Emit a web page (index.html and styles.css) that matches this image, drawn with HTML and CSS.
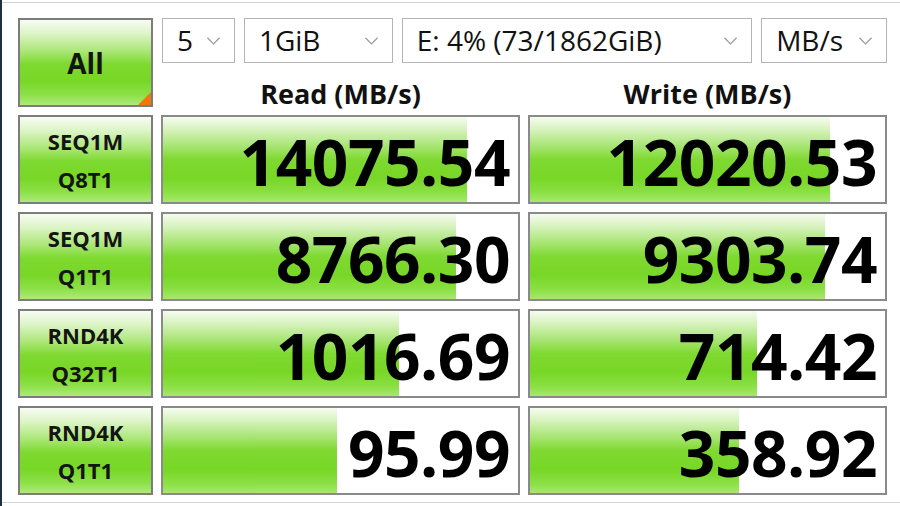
FILE: index.html
```html
<!DOCTYPE html>
<html>
<head>
<meta charset="utf-8">
<link rel="stylesheet" href="styles.css">
</head>
<body>
<div class="frame">
  <div class="grid">
    <div class="btn all">All<span class="corner"></span></div>
    <div class="combos">
      <div class="combo w5"><span>5</span><svg class="chev" viewBox="0 0 16 10"><path d="M1.5 1.5 L8 8 L14.5 1.5" fill="none" stroke="#9a9a9a" stroke-width="1.3"/></svg></div>
      <div class="combo w1g"><span>1GiB</span><svg class="chev" viewBox="0 0 16 10"><path d="M1.5 1.5 L8 8 L14.5 1.5" fill="none" stroke="#9a9a9a" stroke-width="1.3"/></svg></div>
      <div class="combo wdrv"><span>E: 4% (73/1862GiB)</span><svg class="chev" viewBox="0 0 16 10"><path d="M1.5 1.5 L8 8 L14.5 1.5" fill="none" stroke="#9a9a9a" stroke-width="1.3"/></svg></div>
      <div class="combo wunit"><span>MB/s</span><svg class="chev" viewBox="0 0 16 10"><path d="M1.5 1.5 L8 8 L14.5 1.5" fill="none" stroke="#9a9a9a" stroke-width="1.3"/></svg></div>
    </div>
    <div class="head">Read (MB/s)</div>
    <div class="head">Write (MB/s)</div>

    <div class="btn label">SEQ1M<br>Q8T1</div>
    <div class="val"><div class="bar" style="width:85.5%"></div><span>14075.54</span></div>
    <div class="val"><div class="bar" style="width:84.5%"></div><span>12020.53</span></div>

    <div class="btn label">SEQ1M<br>Q1T1</div>
    <div class="val"><div class="bar" style="width:82.5%"></div><span>8766.30</span></div>
    <div class="val"><div class="bar" style="width:83%"></div><span>9303.74</span></div>

    <div class="btn label">RND4K<br>Q32T1</div>
    <div class="val"><div class="bar" style="width:66.5%"></div><span>1016.69</span></div>
    <div class="val"><div class="bar" style="width:64%"></div><span>714.42</span></div>

    <div class="btn label">RND4K<br>Q1T1</div>
    <div class="val"><div class="bar" style="width:49%"></div><span>95.99</span></div>
    <div class="val"><div class="bar" style="width:59%"></div><span>358.92</span></div>
  </div>
</div>
</body>
</html>
```
FILE: styles.css
```css
html, body {
  margin: 0;
  padding: 0;
  background: #ffffff;
  width: 900px;
  height: 506px;
  overflow: hidden;
}
body {
  box-sizing: border-box;
  border-left: 2px solid #1f2f3f;
}
.frame {
  box-sizing: border-box;
  width: 898px;
  height: 501px;
  border-top: 1px solid #d4d4d4;
  border-bottom: 1px solid #d4d4d4;
  margin-top: 2px;
  padding: 15px 0 0 16px;
  font-family: "Open Sans", "Noto Sans", sans-serif;
}
.grid {
  display: grid;
  grid-template-columns: 135px 359px 359px;
  grid-template-rows: 44px 37px 89px 89px 89px 89px;
  column-gap: 8px;
  row-gap: 8px;
}
.btn {
  box-sizing: border-box;
  border: 2px solid #7c7c7c;
  background: linear-gradient(to bottom, #f8fcf4 0%, #dcf4c6 16%, #ace779 36%, #7ed930 52%, #78d726 72%, #8de048 88%, #aeea7a 100%);
  display: flex;
  align-items: center;
  justify-content: center;
  text-align: center;
  color: #141414;
  font-weight: 700;
  position: relative;
}
.all {
  grid-row: 1 / 3;
  font-size: 28px;
}
.corner {
  position: absolute;
  right: 0;
  bottom: 0;
  width: 0;
  height: 0;
  border-style: solid;
  border-width: 0 0 13px 13px;
  border-color: transparent transparent #f2760a transparent;
}
.label {
  font-size: 22px;
  line-height: 38px;
  padding-top: 1px;
}
.combos {
  grid-column: 2 / 4;
  display: flex;
  gap: 9px;
  margin-left: 1px;
}
.combo {
  box-sizing: border-box;
  height: 45px;
  border: 1px solid #b4b4b4;
  background: #ffffff;
  display: flex;
  align-items: center;
  justify-content: space-between;
  padding: 0 13px 2px 14px;
  font-size: 28px;
  color: #111;
}
.chev { width: 15px; height: 10px; flex: none; margin-top: 2px; }
.w5 { width: 73px; }
.w1g { width: 149px; }
.wdrv { width: 351px; }
.wunit { width: 126px; }
.head {
  font-size: 27px;
  font-weight: 700;
  text-align: center;
  line-height: 1;
  align-self: end;
  color: #111;
}
.val {
  box-sizing: border-box;
  border: 2px solid #8a8a8a;
  background: #ffffff;
  position: relative;
  display: flex;
  align-items: center;
  justify-content: flex-end;
  padding-right: 8px;
  overflow: hidden;
}
.grid > .val:nth-child(5), .grid > .val:nth-child(8), .grid > .val:nth-child(11), .grid > .val:nth-child(14) { margin-left: 1px; }
.bar {
  position: absolute;
  left: 0;
  top: 0;
  bottom: 0;
  background: linear-gradient(to bottom, #f6fcf0 0%, #d8f3c0 14%, #a8e574 34%, #7fd931 50%, #78d726 72%, #8adf42 88%, #a6e86e 100%);
}
.val span {
  position: relative;
  font-size: 64px;
  font-weight: 700;
  color: #000;
  line-height: 1;
  padding-top: 4px;
  letter-spacing: -0.5px;
}
```
